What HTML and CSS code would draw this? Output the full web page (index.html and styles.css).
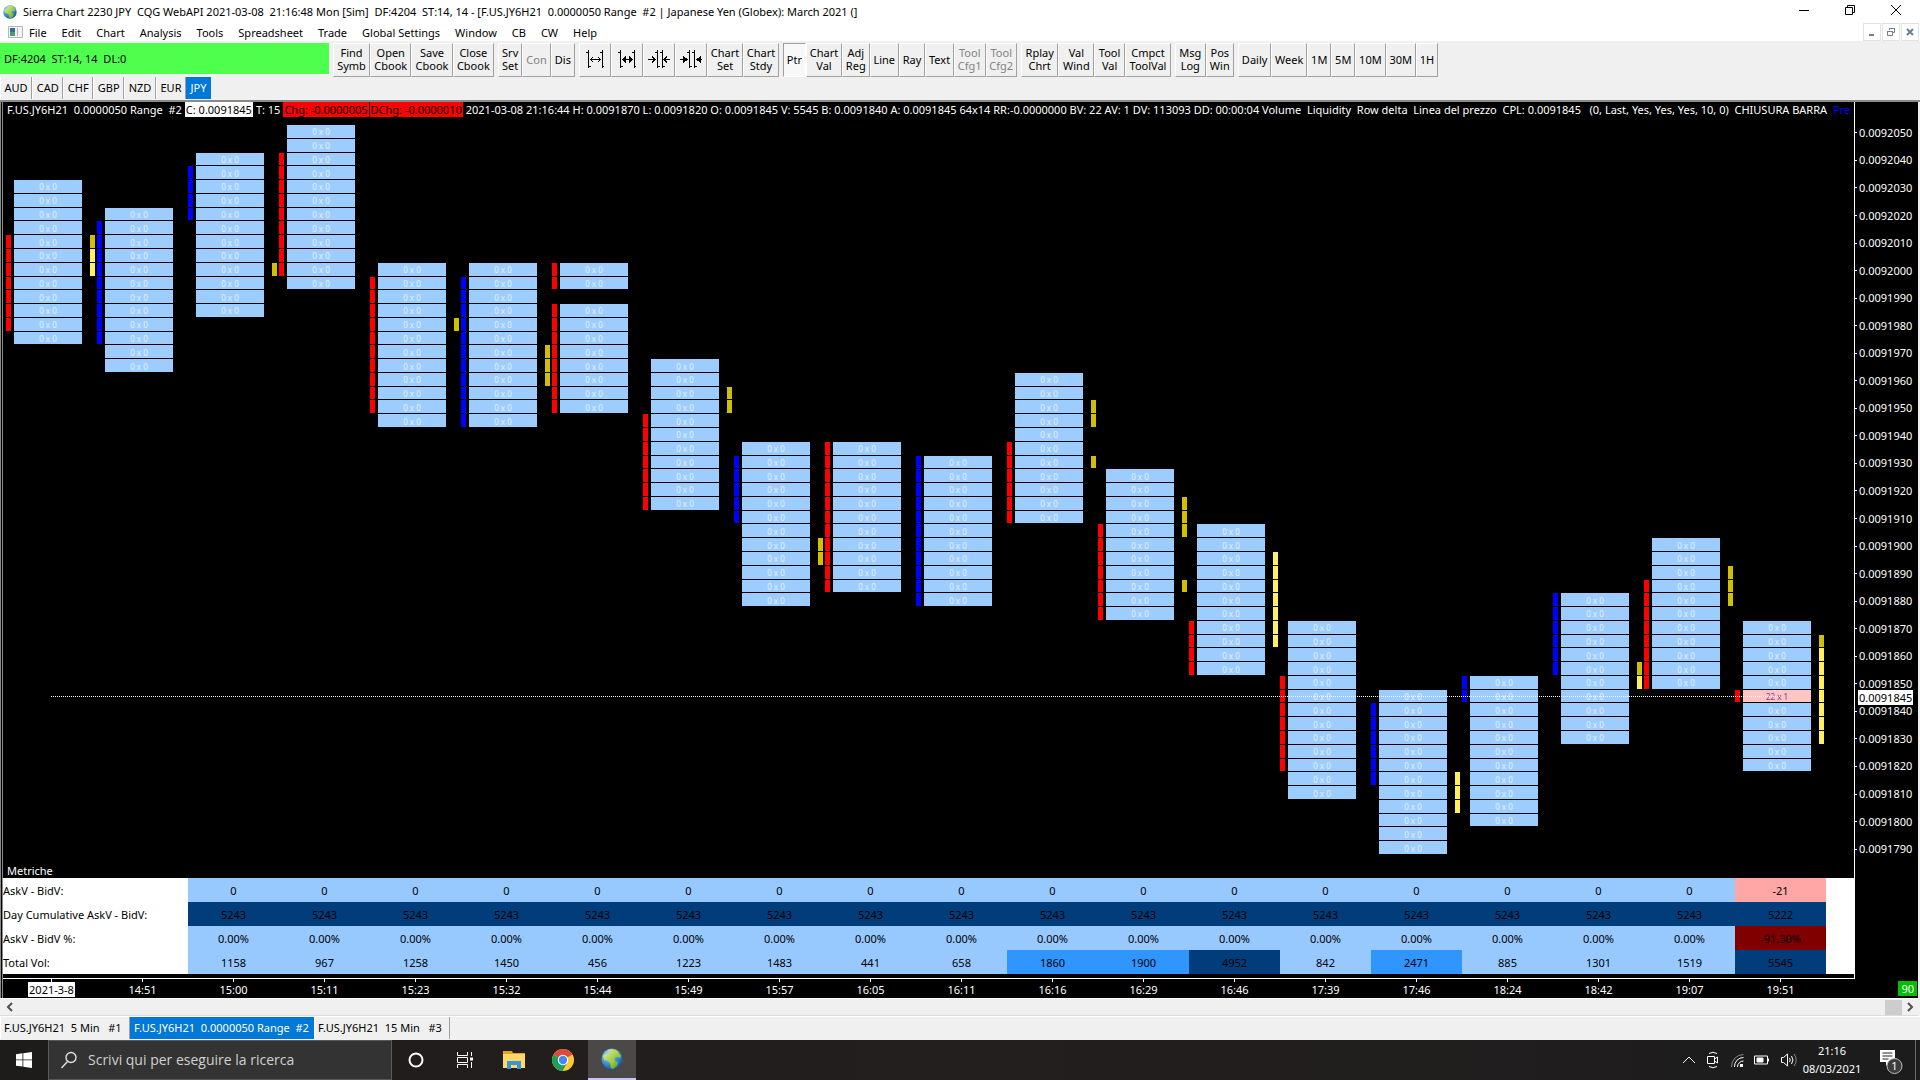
FILE: index.html
```html
<!DOCTYPE html>
<html lang="en">
<head>
<meta charset="utf-8">
<title>Sierra Chart</title>
<link rel="stylesheet" href="styles.css">
</head>
<body>
<svg class="defs" width="0" height="0" aria-hidden="true">
  <defs>
    <radialGradient id="sea" cx=".35" cy=".3" r=".8"><stop offset="0" stop-color="#b9e4fb"/><stop offset=".5" stop-color="#3f97dc"/><stop offset="1" stop-color="#124a8c"/></radialGradient>
    <linearGradient id="land" x1="0" y1="0" x2="1" y2="1"><stop offset="0" stop-color="#e6f08a"/><stop offset=".6" stop-color="#9bc93c"/><stop offset="1" stop-color="#4c8f1d"/></linearGradient>
    <symbol id="globe" viewBox="0 0 22 22">
      <circle cx="11" cy="11" r="10.500" fill="url(#sea)"/>
      <path d="M7 2c3-1.500 8-1 10 1.500l3 4.500-1 2-3-1-3 1 1 3 3 1-1 4-4 3-2-1-1-5-2-2-4-1-1-4 2-2 3 1 2-2-1-2-2 1z" fill="url(#land)"/>
    </symbol>
  </defs>
</svg>

<header class="titlebar">
  <svg class="app-icon" viewBox="0 0 22 22"><use href="#globe"/></svg>
  <h1>Sierra Chart 2230 JPY&nbsp; CQG WebAPI 2021-03-08&nbsp; 21:16:48 Mon [Sim]&nbsp; DF:4204&nbsp; ST:14, 14 - [F.US.JY6H21&nbsp; 0.0000050 Range&nbsp; #2 | Japanese Yen (Globex): March 2021 (]</h1>
  <div class="window-controls">
    <button aria-label="Minimize"><svg width="12" height="12" viewBox="0 0 12 12"><path d="M1 6.500h10"/></svg></button>
    <button aria-label="Restore"><svg width="12" height="12" viewBox="0 0 12 12"><path d="M1.500 3.500h7v7h-7zM3.500 3.500v-2h7v7h-2"/></svg></button>
    <button aria-label="Close"><svg width="12" height="12" viewBox="0 0 12 12"><path d="M1 1l10 10M11 1L1 11"/></svg></button>
  </div>
</header>

<nav class="menubar">
  <svg class="doc-icon" width="15" height="12" viewBox="0 0 15 12"><path d="M.5.500h14v11H.5z" fill="#f4f4f4" stroke="#b5b5b5"/><path d="M2 2h5v8H2z" fill="#2f6f8c"/><path d="M2 6h5v4H2z" fill="#4d9a78"/><path d="M9 2h1v8H9z" fill="#a9b4c8"/></svg>
  <button>File</button><button>Edit</button><button>Chart</button><button>Analysis</button><button>Tools</button><button>Spreadsheet</button><button>Trade</button><button>Global Settings</button><button>Window</button><button>CB</button><button>CW</button><button>Help</button>
  <div class="mdi-controls">
    <button aria-label="Minimize chart"><svg width="10" height="10" viewBox="0 0 10 10"><path d="M2 8h5" stroke-width="2"/></svg></button>
    <button aria-label="Restore chart"><svg width="10" height="10" viewBox="0 0 10 10"><path d="M1.500 4.500h5v4h-5zM3.500 3V1.500h5v4H7M1 4.500h6M3 1.500h6"/></svg></button>
    <button aria-label="Close chart"><svg width="10" height="10" viewBox="0 0 10 10"><path d="M2 2l6 6M8 2L2 8" stroke-width="2"/></svg></button>
  </div>
</nav>

<div class="toolbar">
  <div class="feed-status">DF:4204&nbsp; ST:14, 14&nbsp; DL:0</div>
  <div class="tools tools-book"><button>Find<br>Symb</button><button>Open<br>Cbook</button><button>Save<br>Cbook</button><button>Close<br>Cbook</button></div>
  <div class="tools tools-server"><button>Srv<br>Set</button><button disabled>Con</button><button>Dis</button></div>
  <div class="tools tools-chart">
    <button class="icon-tool" aria-label="Increase bar spacing"><svg width="18" height="20" viewBox="0 0 18 20"><path d="M2.500 1v18M0 3.500h2M3 17.500h2M16.500 1v18M14 3.500h2M17 17.500h1M4 10.500h11M7 8l-2.500 2.500L7 13M12 8l2.500 2.500L12 13"/></svg></button>
    <button class="icon-tool" aria-label="Increase bar width"><svg width="18" height="20" viewBox="0 0 18 20"><path d="M2.500 1v18M0 3.500h2M3 17.500h2M16.500 1v18M14 3.500h2M17 17.500h1M4 10.500h11"/><path d="M8 7v7l-4-3.500zM11 7v7l4-3.500z" fill="#000" stroke="none"/></svg></button>
    <button class="icon-tool" aria-label="Decrease bar spacing"><svg width="22" height="20" viewBox="0 0 22 20"><path d="M9.500 1v18M7 3.500h2M10 17.500h2M14.500 1v18M12 3.500h2M15 17.500h2M0 10.500h7M4 7.500l3 3-3 3M22 10.500h-6M19 7.500l-3 3 3 3"/></svg></button>
    <button class="icon-tool" aria-label="Decrease bar width"><svg width="22" height="20" viewBox="0 0 22 20"><path d="M9.500 1v18M7 3.500h2M10 17.500h2M14.500 1v18M12 3.500h2M15 17.500h2M0 10.500h7M22 10.500h-6"/><path d="M3 7v7l5-3.500zM21 7v7l-5-3.500z" fill="#000" stroke="none"/></svg></button>
    <button>Chart<br>Set</button><button>Chart<br>Stdy</button>
  </div>
  <div class="tools tools-draw"><button class="pressed">Ptr</button><button>Chart<br>Val</button><button>Adj<br>Reg</button><button>Line</button><button>Ray</button><button>Text</button><button disabled>Tool<br>Cfg1</button><button disabled>Tool<br>Cfg2</button></div>
  <div class="tools tools-values"><button>Rplay<br>Chrt</button><button>Val<br>Wind</button><button>Tool<br>Val</button><button>Cmpct<br>ToolVal</button></div>
  <div class="tools tools-windows"><button>Msg<br>Log</button><button>Pos<br>Win</button></div>
  <div class="tools tools-period"><button>Daily</button><button>Week</button><button>1M</button><button>5M</button><button>10M</button><button>30M</button><button>1H</button></div>
</div>

<div class="symbolbar">
  <div class="symbols"><button>AUD</button><button>CAD</button><button>CHF</button><button>GBP</button><button>NZD</button><button>EUR</button><button class="active">JPY</button></div>
</div>

<main class="chart">
  <div class="chart-header">
    <span>F.US.JY6H21&nbsp; 0.0000050 Range&nbsp; #2</span>
    <span class="tag tag-close">C: 0.0091845</span>
    <span>T: 15</span>
    <span class="tag tag-change">Chg: -0.0000005</span>
    <span class="tag tag-change">DChg: -0.0000010</span>
    <span>2021-03-08 21:16:44 H: 0.0091870 L: 0.0091820 O: 0.0091845 V: 5545 B: 0.0091840 A: 0.0091845 64x14 RR:-0.0000000 BV: 22 AV: 1 DV: 113093 DD: 00:00:04 Volume&nbsp; Liquidity&nbsp; Row delta&nbsp; Linea del prezzo&nbsp; CPL: 0.0091845&nbsp;&nbsp; (0, Last, Yes, Yes, Yes, 10, 0)&nbsp; CHIUSURA BARRA</span>
    <span class="study-link">Pre</span>
  </div>
  <section class="plot" id="plot" aria-label="Footprint bars"></section>
  <h2 class="metrics-title">Metriche</h2>
  <table class="metrics">
    <colgroup><col class="metric-name"></colgroup>
    <tbody id="metrics"></tbody>
  </table>
  <div class="baseline"></div>
  <div class="price-axis" id="prices"></div>
  <div class="time-axis" id="times"></div>
  <span class="countdown">90</span>
</main>

<div class="scrollbar">
  <button aria-label="Scroll left"><svg width="8" height="10" viewBox="0 0 8 10"><path d="M6 1L2 5l4 4"/></svg></button>
  <span class="thumb"></span>
  <button aria-label="Scroll right"><svg width="8" height="10" viewBox="0 0 8 10"><path d="M2 1l4 4-4 4"/></svg></button>
</div>

<div class="chart-tabs">
  <button class="tab-small">F.US.JY6H21&nbsp; 5 Min&nbsp;&nbsp; #1</button>
  <button class="tab-range active">F.US.JY6H21&nbsp; 0.0000050 Range&nbsp; #2</button>
  <button class="tab-long">F.US.JY6H21&nbsp; 15 Min&nbsp;&nbsp; #3</button>
</div>

<footer class="taskbar">
  <button class="start" aria-label="Start"><svg width="16" height="16" viewBox="0 0 16 16" fill="#fff"><path d="M0 2.200l6.500-.9v6.200H0zM7.300 1.200L16 0v7.500H7.300zM0 8.300h6.500v6.300L0 13.700zM7.300 8.300H16V16l-8.700-1.200z"/></svg></button>
  <label class="search">
    <svg width="18" height="18" viewBox="0 0 18 18" fill="none" stroke="#e0e0e0" stroke-width="1.400"><circle cx="11" cy="6.500" r="5"/><path d="M7.500 10.500L1.500 17"/></svg>
    <input type="text" placeholder="Scrivi qui per eseguire la ricerca" aria-label="Scrivi qui per eseguire la ricerca">
  </label>
  <div class="apps">
    <button aria-label="Cortana"><svg width="18" height="18" viewBox="0 0 18 18" fill="none" stroke="#fff" stroke-width="2"><circle cx="9" cy="9" r="6.500"/></svg></button>
    <button aria-label="Task view"><svg width="18" height="18" viewBox="0 0 18 18" fill="none" stroke="#fff"><path d="M1.500 1v3.500h10V1M1.500 17v-3.500h10V17M1.500 6.500h10v5h-10zM15.500 1v4M15.500 11v6"/><path d="M14 6.500h3v3h-3z" fill="#fff" stroke="none"/></svg></button>
    <button aria-label="File Explorer"><svg width="22" height="20" viewBox="0 0 22 20"><path d="M0 1h9l1 2h12v15H0z" fill="#e7a21b"/><path d="M0 4h22v14H0z" fill="#ffd968"/><path d="M4 11h14v8h-4v-4H8v4H4z" fill="#3a95d8"/></svg></button>
    <button aria-label="Chrome"><svg width="22" height="22" viewBox="0 0 22 22"><circle cx="11" cy="11" r="11" fill="#fbc934"/><path d="M11 11L1.500 5.500A11 11 0 0 1 20.500 5.500z" fill="#dd4b3e"/><path d="M11 6h9.800a11 11 0 0 0-.3-.5L11 2z" fill="#dd4b3e"/><path d="M1.500 5.500A11 11 0 0 0 10.500 22L15.300 13.500 11 11z" fill="#1e9e58"/><circle cx="11" cy="11" r="5.200" fill="#fff"/><circle cx="11" cy="11" r="4.200" fill="#4688f1"/></svg></button>
    <button class="running" aria-label="Sierra Chart"><svg width="22" height="22" viewBox="0 0 22 22"><use href="#globe"/></svg></button>
  </div>
  <div class="tray">
    <svg width="14" height="8" viewBox="0 0 14 8"><path d="M1 7l6-6 6 6"/></svg>
    <svg width="14" height="18" viewBox="0 0 14 18"><path d="M1.500 5.500h7v7h-7zM8.500 8l3-2v6l-3-2M3 2.500q4-2.500 8 0M3 15.500q4 2.500 8 0"/></svg>
    <svg width="14" height="14" viewBox="0 0 14 14"><g class="faint"><path d="M1.500 14A12 12 0 0 1 13.500 1.500"/></g><path d="M4.500 14A9 9 0 0 1 13.500 4.500M7.500 14a6 6 0 0 1 6-6"/><path d="M10 11h3v3h-3z" fill="#fff" stroke="none"/></svg>
    <svg width="16" height="10" viewBox="0 0 16 10"><path d="M.5 1h13v8H.5zM14.500 3.500v3"/><path d="M3 3h6v4H3z" fill="#fff"/></svg>
    <svg width="18" height="14" viewBox="0 0 18 14"><path d="M1.500 4.500h2l4-3.500v12l-4-3.500h-2zM9.500 5q1.500 2 0 4M11.500 3q3 4 0 8"/><g class="faint"><path d="M14 1q4.500 6 0 12"/></g></svg>
  </div>
  <time class="clock" datetime="2021-03-08T21:16"><span>21:16</span><span>08/03/2021</span></time>
  <button class="notifications" aria-label="Notifications">
    <svg width="24" height="26" viewBox="0 0 24 26"><path d="M1 1h15v12H10l-3 4v-4H1z" fill="#fff"/><path d="M3.500 4h10M3.500 7h10M3.500 10h6" stroke="#222"/><circle cx="15.500" cy="17" r="7.500" fill="#3d3d3d" stroke="#bbb"/></svg>
    <span class="badge">1</span>
  </button>
  <span class="show-desktop"></span>
</footer>
<script src="chart.js"></script>
</body>
</html>
```
FILE: styles.css
```css
* { box-sizing: border-box; }

body {
  margin: 0;
  min-height: 100vh;
  display: flex;
  flex-direction: column;
  background: #f0f0f0;
  color: #000;
  font: 11px/14px "Noto Sans", "Open Sans", sans-serif;
  white-space: nowrap;
  overflow-x: hidden;
}

button {
  margin: 0;
  padding: 0;
  border: 0;
  background: none;
  color: inherit;
  font: inherit;
}

h1, h2 { margin: 0; font: inherit; }
.defs { position: absolute; }

/* title bar */
.titlebar {
  display: flex;
  align-items: center;
  height: 22px;
  padding: 2px 17px 0 3px;
  gap: 6px;
  background: #fff;
}
.app-icon { width: 14px; height: 14px; }
.titlebar h1 { flex: 1; }
.window-controls { display: flex; gap: 33px; padding-bottom: 4px; }
.window-controls button { width: 13px; height: 12px; }
.window-controls svg { display: block; fill: none; stroke: #000; }

/* menu bar */
.menubar {
  display: flex;
  align-items: center;
  height: 19px;
  gap: 15px;
  padding-left: 8px;
  background: #fff;
}
.doc-icon { margin-right: -9px; }
.menubar > button { padding-top: 3px; }
.mdi-controls { display: flex; gap: 1px; margin-left: auto; padding-right: 1px; }
.mdi-controls button {
  display: grid;
  place-items: center;
  width: 18px;
  height: 18px;
  border: 1px solid #e2e2e2;
  background: #fff;
}
.mdi-controls svg { fill: none; stroke: #6d7f92; }

/* tool bar */
.toolbar { display: flex; gap: 4px; padding-top: 2px; }
.feed-status {
  width: 329px;
  height: 31px;
  padding: 9px 4px;
  background: #4eff4e;
  line-height: 14px;
}
.tools { display: flex; height: 34px; }
.tools button {
  flex: 1 1 auto;
  padding: 0 1px 2px;
  border: 1px solid;
  border-color: #fff #a0a0a0 #a0a0a0 #fff;
  line-height: 13px;
}
.tools button:disabled { color: #838383; }
.tools .icon-tool { display: grid; place-items: center; flex: 0 0 32px; }
.icon-tool svg { fill: none; stroke: #000; shape-rendering: crispEdges; }
.tools .pressed { background: #f8f8f8; border-color: #a0a0a0 #fff #fff #a0a0a0; }
.tools-book { width: 161px; }
.tools-server { width: 77px; }
.tools-chart { width: 200px; }
.tools-draw { width: 234px; }
.tools-values { width: 150px; }
.tools-windows { width: 59px; }
.tools-period { width: 200px; }

/* symbol bar */
.symbolbar { height: 25px; border-bottom: 2px solid #8a8a8a; }
.symbols { display: flex; width: 211px; }
.symbols button {
  flex: 1 1 auto;
  height: 22px;
  border-left: 1px solid #fff;
  border-right: 1px solid #a0a0a0;
}
.symbols .active { background: #0078d7; border-color: #0078d7; color: #fff; }

/* chart */
.chart {
  flex: 1;
  display: grid;
  grid-template-columns: minmax(0, 1fr) 64px;
  grid-template-rows: 23px minmax(583px, 1fr) 23px 96px 5px 19px;
  margin-right: 2px;
  border-left: 3px double #8a8a8a;
  background: #000;
  color: #fff;
}
.chart > * { grid-column: 1; }
.chart-header {
  display: flex;
  gap: 3px;
  padding-left: 4px;
  line-height: 15px;
  overflow: hidden;
}
.tag { height: 15px; padding: 0 1px; color: #000; }
.tag-close { background: #fff; }
.tag-change { background: #f00; }
.tag-change + .tag-change { margin-left: -2px; }
.study-link { margin-left: 3px; color: #00f; }

.plot {
  position: relative;
  display: grid;
  grid-template-columns: repeat(20, minmax(0, 1fr));
  padding: 0 28px 0 3px;
}
.bar, .price-layer {
  display: grid;
  grid-template-rows: repeat(53, minmax(0, 1fr));
}
.bar { grid-template-columns: 5px 3px minmax(0, 1fr) 8px 5px 2px; }
.bar > * { margin-bottom: 1px; }
.cell {
  grid-column: 3;
  display: grid;
  place-items: center;
  padding-top: 2px;
  background: #9dcdff;
  color: #e4f1ff;
  font: 8px/10px "Noto Sans", sans-serif;
}
.cell.last { background: #ffc4c4; color: #8b3a8b; }
.delta { grid-column: 1; }
.sell { background: #f00; }
.buy { background: #00f; }
.liquidity { grid-column: 5; background: #cfc000; }
.liquidity.high { background: #fff05c; }
.price-layer { position: absolute; inset: 0 73px 0 48px; }
.price-line {
  align-self: center;
  height: 1px;
  background: repeating-linear-gradient(90deg, #fff 0 1px, transparent 1px 2px);
}

.metrics-title { padding: 8px 4px 0; line-height: 15px; }
.metrics {
  width: 100%;
  table-layout: fixed;
  border-collapse: collapse;
  background: #fff;
  color: #000;
}
.metric-name { width: 185px; }
.metrics th { padding: 1px 0 0; font-weight: 400; text-align: left; }
.metrics td { height: 24px; padding: 1px 0 0; text-align: center; }
.metrics td.filler { width: 28px; }
.low { background: #97c9ff; }
.mid { background: #3096ff; }
.high-volume { background: #003d7a; }
.loss { background: #ffa6a6; }
.heavy-loss { background: #800000; }
.baseline { border-bottom: 1px solid #fff; }

.chart .price-axis {
  grid-column: 2;
  grid-row: 1 / 6;
  display: grid;
  grid-template-rows: repeat(53, minmax(0, 1fr));
  padding: 24px 0 123px;
  border-left: 1px solid #fff;
}
.price { display: flex; align-items: center; align-self: center; gap: 2px; height: 0; }
.price::before { content: ""; width: 2px; height: 1px; background: #fff; }
.price.current { z-index: 1; }
.price.current::before { background: none; width: 1px; }
.current span { padding: 0 1px; background: #fff; color: #000; line-height: 15px; }

.chart .time-axis {
  grid-column: 1 / 3;
  grid-row: 6;
  display: grid;
  grid-template-columns: repeat(20, minmax(0, 1fr));
  padding: 0 92px 0 3px;
}
.time { display: flex; flex-direction: column; align-items: center; }
.time::before { content: ""; width: 1px; height: 3px; background: #fff; }
.time span { line-height: 15px; padding: 0 1px; }
.time .date { background: #fff; color: #000; }
.chart .countdown {
  grid-column: 2;
  grid-row: 6;
  justify-self: end;
  align-self: center;
  margin-right: 1px;
  padding: 0 3px;
  background: #00c000;
  line-height: 15px;
}

/* scroll bar and chart tabs */
.scrollbar {
  display: flex;
  align-items: center;
  height: 18px;
  margin-right: 2px;
  padding-left: 2px;
  border-top: 1px solid #fff;
  border-bottom: 1px solid #dcdcdc;
}
.scrollbar button { display: grid; place-items: center; width: 16px; height: 16px; }
.scrollbar svg { fill: none; stroke: #505050; stroke-width: 2; }
.thumb { width: 17px; height: 15px; margin-left: auto; background: #cdcdcd; }
.chart-tabs { display: flex; height: 24px; padding-bottom: 1px; border-top: 1px solid #fff; }
.chart-tabs button {
  padding-left: 3px;
  border-right: 1px solid #a0a0a0;
  border-left: 1px solid #fff;
  text-align: left;
}
.chart-tabs .active { background: #0078d7; border-color: #0078d7; color: #fff; }
.tab-small { width: 130px; }
.tab-range { width: 184px; }
.tab-long { width: 136px; }

/* task bar */
.taskbar {
  display: flex;
  align-items: center;
  height: 40px;
  background: linear-gradient(90deg, #1d1c1b, #241f1f 50%, #1c1c1c);
  color: #fff;
}
.start { display: grid; place-items: center; width: 48px; height: 40px; }
.search {
  display: flex;
  align-items: center;
  gap: 10px;
  width: 344px;
  height: 40px;
  padding-left: 11px;
  border: 1px solid #5a5a5a;
  background: #333;
}
.search input {
  flex: 1;
  min-width: 0;
  padding: 0;
  border: 0;
  outline: 0;
  background: none;
  color: #fff;
  font: 14px/20px "Open Sans", sans-serif;
}
.search input::placeholder { color: #d0d0d0; opacity: 1; }
.apps { display: flex; gap: 1px; }
.apps button { display: grid; place-items: center; width: 48px; height: 40px; }
.apps .running { background: #4b4948; border-bottom: 2px solid #c8c0fa; }
.tray { display: flex; align-items: center; gap: 10px; margin-left: auto; }
.tray svg { fill: none; stroke: #fff; }
.tray .faint { stroke: #888; }
.clock {
  display: flex;
  flex-direction: column;
  align-items: center;
  width: 68px;
  line-height: 18px;
}
.notifications { position: relative; width: 24px; height: 26px; margin: 4px 12px 0 13px; }
.notifications svg { display: block; }
.badge { position: absolute; left: 12px; top: 10px; width: 7px; text-align: center; }
.show-desktop { width: 5px; height: 40px; border-left: 1px solid #6a6a6a; }
```
FILE: chart.js
```js
// Each bar: price rows that traded, delta side with its rows, and liquidity rows.
// Row 0 is 0.0092050; every following row is one 0.0000005 tick lower.
const bars = [
  { cells: [[4, 15]], side: 'sell', delta: [[8, 14]], liq: [[8, 8]], high: [[9, 10]] },
  { cells: [[6, 17]], side: 'buy', delta: [[7, 15]] },
  { cells: [[2, 13]], side: 'buy', delta: [[3, 6]], liq: [[10, 10]] },
  { cells: [[0, 11]], side: 'sell', delta: [[2, 10]] },
  { cells: [[10, 21]], side: 'sell', delta: [[11, 20]], liq: [[14, 14]] },
  { cells: [[10, 21]], side: 'buy', delta: [[11, 21]], liq: [[16, 18]] },
  { cells: [[10, 11], [13, 20]], side: 'sell', delta: [[10, 11], [13, 20]] },
  { cells: [[17, 27]], side: 'sell', delta: [[21, 27]], liq: [[19, 20]] },
  { cells: [[23, 34]], side: 'buy', delta: [[24, 28]], liq: [[30, 31]] },
  { cells: [[23, 33]], side: 'sell', delta: [[23, 33]] },
  { cells: [[24, 34]], side: 'buy', delta: [[24, 34]] },
  { cells: [[18, 28]], side: 'sell', delta: [[23, 28]], liq: [[20, 21], [24, 24]] },
  { cells: [[25, 35]], side: 'sell', delta: [[29, 35]], liq: [[27, 29], [33, 33]] },
  { cells: [[29, 39]], side: 'sell', delta: [[36, 39]], high: [[31, 37]] },
  { cells: [[36, 48]], side: 'sell', delta: [[40, 46]] },
  { cells: [[41, 52]], side: 'buy', delta: [[42, 47]], high: [[47, 49]] },
  { cells: [[40, 50]], side: 'buy', delta: [[40, 41]] },
  { cells: [[34, 44]], side: 'buy', delta: [[34, 39]], liq: [[39, 39]], high: [[40, 40]] },
  { cells: [[30, 40]], side: 'sell', delta: [[33, 40]], liq: [[32, 34]] },
  { cells: [[36, 46]], side: 'sell', delta: [[41, 41]], liq: [[37, 37]], high: [[38, 44]] }
];
const currentRow = 41;
const lastBar = bars.length - 1;

function add(parent, tag, className, text) {
  const el = document.createElement(tag);
  if (className) el.className = className;
  if (text !== undefined) el.textContent = text;
  parent.append(el);
  return el;
}

function addRows(parent, ranges, className, label) {
  (ranges || []).forEach(([from, to]) => {
    for (let row = from; row <= to; row++) {
      const el = add(parent, 'div', className, label);
      el.style.gridRow = row + 1;
      if (label && parent.dataset.last && row === currentRow) {
        el.classList.add('last');
        el.textContent = '22 x 1';
      }
    }
  });
}

const plot = document.getElementById('plot');
bars.forEach((bar, i) => {
  const el = add(plot, 'div', 'bar');
  if (i === lastBar) el.dataset.last = 'true';
  addRows(el, bar.delta, 'delta ' + bar.side);
  addRows(el, bar.cells, 'cell', '0 x 0');
  addRows(el, bar.liq, 'liquidity');
  addRows(el, bar.high, 'liquidity high');
});
const layer = add(plot, 'div', 'price-layer');
add(layer, 'div', 'price-line').style.gridRow = currentRow + 1;

const prices = document.getElementById('prices');
const priceAt = row => '0.00' + (92050 - row * 5);
for (let row = 0; row <= 52; row++) {
  if (row % 2 && row !== currentRow) continue;
  const el = add(prices, 'div', row === currentRow ? 'price current' : 'price');
  el.style.gridRow = row + 1;
  add(el, 'span', '', priceAt(row));
}

const times = ['2021-3-8', '14:51', '15:00', '15:11', '15:23', '15:32', '15:44', '15:49', '15:57', '16:05',
  '16:11', '16:16', '16:29', '16:46', '17:39', '17:46', '18:24', '18:42', '19:07', '19:51'];
times.forEach((t, i) => add(add(document.getElementById('times'), 'div', 'time'), 'span', i ? '' : 'date', t));

const volumes = [1158, 967, 1258, 1450, 456, 1223, 1483, 441, 658, 1860, 1900, 4952, 842, 2471, 885, 1301, 1519, 5545];
const volumeClass = v => v > 4000 ? 'high-volume' : v > 1800 ? 'mid' : 'low';
const repeated = (text, cls, lastText, lastCls) =>
  volumes.map((v, i) => i < volumes.length - 1 ? [text, cls] : [lastText, lastCls]);
const rows = [
  ['AskV - BidV:', repeated('0', 'low', '-21', 'loss')],
  ['Day Cumulative AskV - BidV:', repeated('5243', 'high-volume', '5222', 'high-volume')],
  ['AskV - BidV %:', repeated('0.00%', 'low', '-91.30%', 'heavy-loss')],
  ['Total Vol:', volumes.map(v => [String(v), volumeClass(v)])]
];
const body = document.getElementById('metrics');
rows.forEach(([name, values]) => {
  const tr = add(body, 'tr');
  add(tr, 'th', '', name).scope = 'row';
  values.forEach(([text, cls]) => add(tr, 'td', cls, text));
  add(tr, 'td', 'filler');
});
```
